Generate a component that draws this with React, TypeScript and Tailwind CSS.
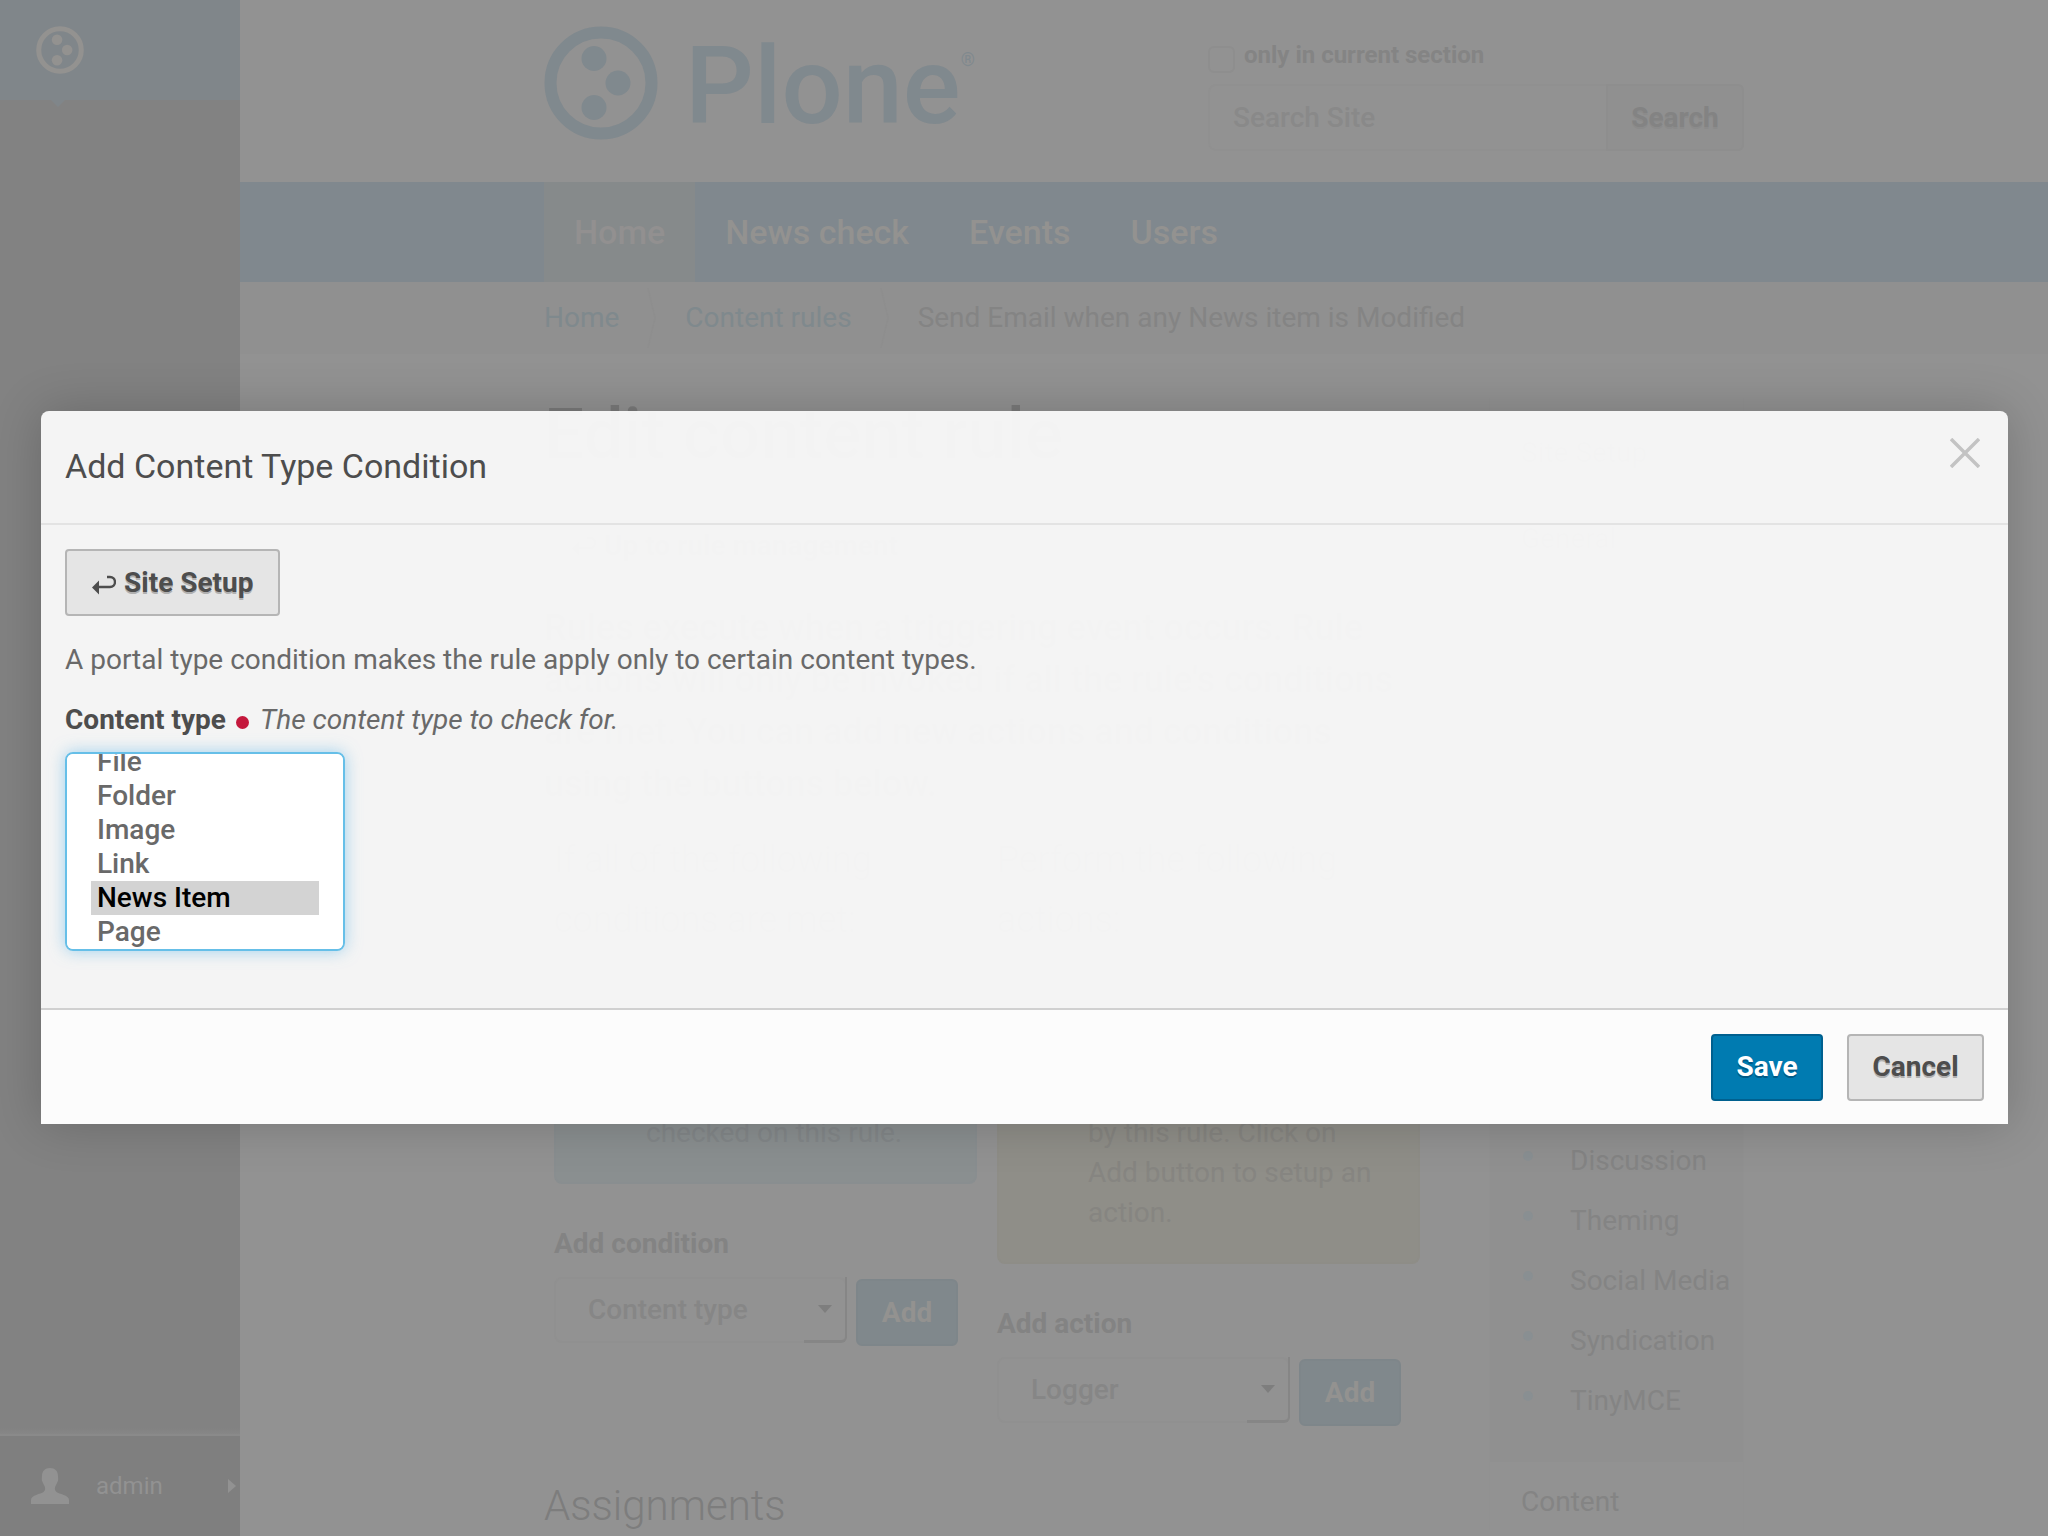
import { useEffect, useRef } from "react";

const navItems = ["News check", "Events", "Users"];

const setupLinks = [
  "Actions",
  "Date and Time",
  "Language",
  "Mail",
  "Navigation",
  "Site",
  "Add-ons",
  "Search",
  "Discussion",
  "Theming",
  "Social Media",
  "Syndication",
  "TinyMCE",
];

const contentTypes = [
  "Collection",
  "Comment",
  "Event",
  "File",
  "Folder",
  "Image",
  "Link",
  "News Item",
  "Page",
  "Plone Site",
];

function PloneMark({ className }: { className: string }) {
  return (
    <svg viewBox="0 0 114 114" className={className} fill="currentColor" aria-hidden="true">
      <circle cx="57" cy="57" r="50.5" fill="none" stroke="currentColor" strokeWidth="12" />
      <circle cx="50" cy="32.5" r="12.5" />
      <circle cx="74" cy="57" r="12.5" />
      <circle cx="50" cy="81.5" r="12.5" />
    </svg>
  );
}

function ReturnArrow({ className }: { className: string }) {
  return (
    <svg viewBox="0 0 24 20" className={className} aria-hidden="true">
      <path d="M15 2h3a4.5 4.5 0 0 1 0 10H6" fill="none" stroke="currentColor" strokeWidth="2.4" />
      <path d="M0 12.5 7 5.5v14z" fill="currentColor" />
    </svg>
  );
}

function Toolbar() {
  return (
    <aside className="flex w-60 shrink-0 flex-col bg-[#828282]">
      <a href="#" aria-label="Plone" className="relative flex h-[100px] items-center bg-[#80868a] pl-9 text-[#939290]">
        <PloneMark className="size-12" />
        <svg viewBox="0 0 14 7" className="absolute top-[100px] left-[51px] h-[7px] w-3.5" aria-hidden="true">
          <path d="M0 0h14L7 7z" fill="#80868a" />
        </svg>
      </a>
      <div className="mt-auto h-1.5 bg-gradient-to-b from-[#828282] to-[#878787]" />
      <a
        href="#"
        className="flex h-[102px] items-center border-t-2 border-[#8a8a8a] bg-[#7f7f7f] pr-1 pl-[31px] text-2xl text-[#929292]"
      >
        <svg viewBox="0 0 38 36" className="h-9 w-[38px]" fill="currentColor" aria-hidden="true">
          <path d="M11 8c0-5 3-8 8-8s8 3 8 8c0 2 .6 4-.3 5.500-.7 1.500-1.200 2.500-1.700 3.500-1.500 2.500-1.700 5 .5 7C28 26 38 27 38 32v4H0v-4c0-5 10-6 12.500-8 2.200-2 2-4.500.5-7-.5-1-1-2-1.700-3.500C10.400 12 11 10 11 8z" />
        </svg>
        <span className="ml-[27px]">admin</span>
        <svg viewBox="0 0 8 14" className="ml-auto h-3.5 w-2" fill="currentColor" aria-hidden="true">
          <path d="M0 0l8 7-8 7z" />
        </svg>
      </a>
    </aside>
  );
}

function Header() {
  return (
    <header className="mx-auto flex h-[182px] w-full max-w-[1200px] justify-between">
      <a href="#" aria-label="Plone" className="mt-[26px] flex h-[114px] items-start text-[#80898e]">
        <PloneMark className="size-[114px]" />
        <span className="ml-[27px] text-[108px]/[120px] font-medium">Plone</span>
        <span className="mt-5 text-lg">®</span>
      </a>
      <form className="mt-[38px] w-[536px]" onSubmit={(e) => e.preventDefault()}>
        <div className="flex h-[46px] items-start">
          <input
            id="section"
            type="checkbox"
            className="mt-2 size-[27px] appearance-none rounded-md border-2 border-[#8e8e8e]"
          />
          <label htmlFor="section" className="ml-[9px] text-2xl/[34px] font-bold text-[#848484]">
            only in current section
          </label>
        </div>
        <div className="flex h-[67px]">
          <input
            aria-label="Search Site"
            placeholder="Search Site"
            className="min-w-0 flex-1 rounded-l-lg border-2 border-r-0 border-[#909090] px-[23px] text-[28px] font-medium placeholder:text-[#898989]"
          />
          <button className="w-[138px] rounded-r-md border-2 border-[#8e8e8e] bg-[#909090] text-[28px] font-bold text-[#838383] [text-shadow:0_2px_0_#8b8b8b]">
            Search
          </button>
        </div>
      </form>
    </header>
  );
}

function Separator() {
  return (
    <svg viewBox="0 0 10 60" className="mx-7 h-[60px] w-2.5" aria-hidden="true">
      <path d="M1 0l7 30-7 30" fill="none" stroke="#8e8e8e" strokeWidth="1.5" />
    </svg>
  );
}

function AddRow({ id, label, value }: { id: string; label: string; value: string }) {
  return (
    <div className="mt-10">
      <label htmlFor={id} className="block text-[28px]/[40px] font-bold text-[#838383]">
        {label}
      </label>
      <div className="mt-[13px] flex items-start gap-[9px]">
        <div className="relative w-[293px]">
          <select
            id={id}
            className="h-[66px] w-full appearance-none rounded-lg border-2 border-[#909090] pl-8 text-[28px] font-medium text-[#868686]"
          >
            <option>{value}</option>
          </select>
          <span className="pointer-events-none absolute inset-y-0 right-0 flex w-[43px] items-center justify-center rounded-br-md border-r-2 border-b-[3px] border-[#868686]">
            <svg viewBox="0 0 14 8" className="h-2 w-3.5" aria-hidden="true">
              <path d="M0 0h14L7 8z" fill="#7e7e7e" />
            </svg>
          </span>
        </div>
        <button className="mt-0.5 h-[67px] w-[102px] rounded-md border-2 border-[#7e868a] bg-[#80888c] text-[28px] font-bold text-[#939290]">
          Add
        </button>
      </div>
    </div>
  );
}

function Page() {
  return (
    <main className="min-w-0 flex-1 bg-[#929292]">
      <Header />
      <nav className="bg-[#80888e]">
        <ul className="mx-auto flex max-w-[1200px] text-[34px]/[100px] font-medium text-[#939290]">
          <li>
            <a href="#" className="block bg-[#868a8b] px-[30px] text-[#929090]">
              Home
            </a>
          </li>
          {navItems.map((item) => (
            <li key={item}>
              <a href="#" className="block px-[30px]">
                {item}
              </a>
            </li>
          ))}
        </ul>
      </nav>
      <nav className="bg-[#909090]" aria-label="Breadcrumb">
        <div className="mx-auto flex h-[72px] max-w-[1200px] items-center text-[28px] text-[#848484]">
          <a href="#" className="text-[#7f898d]">
            Home
          </a>
          <Separator />
          <a href="#" className="text-[#7f898d]">
            Content rules
          </a>
          <Separator />
          <span>Send Email when any News item is Modified</span>
        </div>
      </nav>
      <div className="mx-auto flex max-w-[1200px] gap-[59px] text-[28px]/[40px] text-[#848484]">
        <article className="min-w-0 flex-1 pt-10">
          <h1 className="text-[71px]/[80px] font-medium text-[#7b7b7b]">Edit content rule</h1>
          <a href="#" className="mt-[52px] flex items-center pl-7 font-bold text-[#757575]">
            <ReturnArrow className="mr-2 h-5 w-6" />
            Up to rule management
          </a>
          <p className="mt-9 text-4xl/[52px] font-medium text-[#757575]">
            Rules execute when a triggering event occurs. Rule
            <br />
            actions will only be invoked if all the rule's conditions
            <br />
            are met. You can add new actions and conditions
            <br />
            using the buttons below.
          </p>
          <div className="mt-5 grid grid-cols-2 gap-5 px-2.5">
            <section>
              <h2 className="text-4xl/[60px] font-light text-[#757575]">
                If all of the following
                <br />
                conditions are met:
              </h2>
              <p className="mt-[50px] rounded-lg border-2 border-[#898e90] bg-[#8a8f90] pt-[31px] pb-[29px] pl-[90px] text-[#838789]">
                There is not any
                <br />
                condition
                <br />
                checked on this rule.
              </p>
              <AddRow id="condition" label="Add condition" value="Content type" />
            </section>
            <section>
              <h2 className="text-4xl/[60px] font-light text-[#757575]">
                Perform the following
                <br />
                actions:
              </h2>
              <p className="mt-[50px] rounded-lg border-2 border-[#8e8d87] bg-[#8f8e88] pt-[31px] pb-[29px] pl-[89px] text-[#868581]">
                There is not any
                <br />
                action performed
                <br />
                by this rule. Click on
                <br />
                Add button to setup an
                <br />
                action.
              </p>
              <AddRow id="action" label="Add action" value="Logger" />
            </section>
          </div>
          <h2 className="mt-14 text-[42px]/[48px] font-light text-[#7d7d7d]">Assignments</h2>
        </article>
        <aside className="mt-11 w-[255px] shrink-0 border-x border-[#919191] bg-[#929292] text-[#848484]">
          <h2 className="pt-[35px] pl-[31px] text-[#7e7e7e]">Site Setup</h2>
          <h3 className="mt-[46px] pl-[31px] text-[#7e7e7e]">General</h3>
          <ul className="mt-5 bg-[#909090] pt-8 pb-[31px]">
            {setupLinks.map((item) => (
              <li key={item} className="flex py-2.5 pr-2 pl-[33px]">
                <span className="mt-2.5 mr-[37px] size-2.5 shrink-0 rounded-full bg-[#898f92]" />
                <a href="#">{item}</a>
              </li>
            ))}
          </ul>
          <h3 className="pt-5 pl-[31px]">Content</h3>
        </aside>
      </div>
    </main>
  );
}

function ConditionDialog() {
  const listRef = useRef<HTMLSelectElement>(null);

  useEffect(() => {
    const list = listRef.current;
    // Scrolls the first rows away so that the chosen type is in view.
    if (list) list.scrollTop = 123;
  }, []);

  return (
    <div className="absolute inset-0 flex items-start pt-[411px] pr-10 pl-[41px]">
      <div
        role="dialog"
        aria-labelledby="dialog-title"
        className="w-full rounded-t-lg shadow-[0_0_50px_rgba(0,0,0,0.2)]"
      >
        <div className="flex h-[114px] items-start justify-between rounded-t-lg border-b-2 border-[#e3e3e3] bg-[#fafafa]/95 pr-7 pl-6">
          <h2 id="dialog-title" className="mt-[30px] text-[34px]/[50px] text-[#4d4d4d]">
            Add Content Type Condition
          </h2>
          <button aria-label="Close" className="mt-[27px]">
            <svg viewBox="0 0 30 30" className="size-[30px]" aria-hidden="true">
              <path d="M1 1l28 28M29 1L1 29" stroke="#c3c3c3" strokeWidth="3.5" />
            </svg>
          </button>
        </div>
        <div className="bg-[#fafafa]/95 px-6 pt-6 pb-[57px] text-[28px]/[40px] text-[#696969]">
          <button className="flex h-[67px] items-center rounded-sm border-2 border-[#b5b5b5] bg-[#e5e5e5] px-[25px] font-bold text-[#4d4d4d] [text-shadow:0_2px_0_#b0b0b0]">
            <ReturnArrow className="mt-1 mr-2 h-5 w-6" />
            Site Setup
          </button>
          <p className="mt-6">A portal type condition makes the rule apply only to certain content types.</p>
          <div className="mt-5 flex items-center">
            <label htmlFor="content-type" className="font-bold text-[#4d4d4d]">
              Content type
            </label>
            <span className="mt-1 mr-[11px] ml-2.5 size-[13px] rounded-full bg-[#c4183c]" />
            <em>The content type to check for.</em>
          </div>
          <select
            id="content-type"
            ref={listRef}
            size={5}
            defaultValue="News Item"
            className="mt-3 block h-[199px] w-[280px] rounded-lg border-2 border-[#66bfe8] bg-white px-6 py-3 text-[28px] font-medium text-[#696969] shadow-[0_0_16px_rgba(102,185,233,0.6)] [scrollbar-width:none]"
          >
            {contentTypes.map((type) => (
              <option
                key={type}
                className="h-[34px] px-1.5 py-0 leading-[34px] font-medium checked:bg-[#d3d3d3] checked:text-black"
              >
                {type}
              </option>
            ))}
          </select>
        </div>
        <div className="flex h-[116px] items-center justify-end gap-6 border-t-2 border-[#d0d0d0] bg-[#fcfcfc] px-6 text-[28px] font-bold">
          <button className="h-[67px] w-28 rounded-sm border-2 border-[#00608f] bg-[#007bb1] text-white [text-shadow:0_2px_0_#005a86]">
            Save
          </button>
          <button className="h-[67px] w-[137px] rounded-sm border-2 border-[#b5b5b5] bg-[#e5e5e5] text-[#4d4d4d] [text-shadow:0_2px_0_#b0b0b0]">
            Cancel
          </button>
        </div>
      </div>
    </div>
  );
}

export default function App() {
  return (
    <div className="relative flex min-h-screen overflow-hidden bg-[#929292] font-['Roboto',sans-serif]">
      <Toolbar />
      <Page />
      <ConditionDialog />
    </div>
  );
}
